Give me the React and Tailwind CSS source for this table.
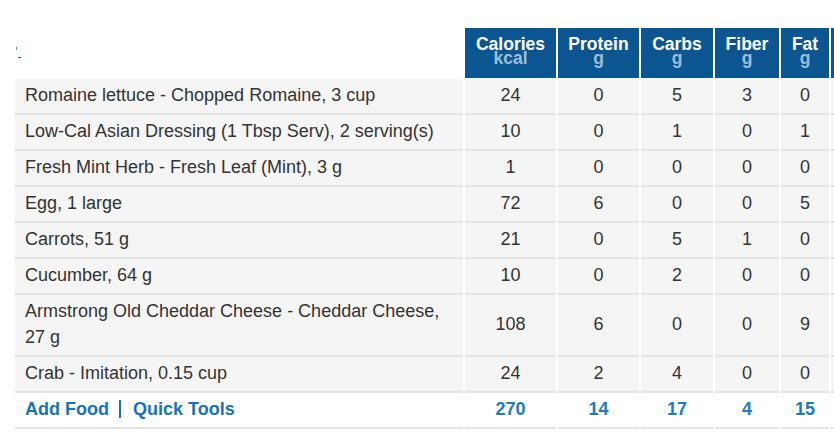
import React from "react";

const rows = [
  ["Romaine lettuce - Chopped Romaine, 3 cup", 24, 0, 5, 3, 0],
  ["Low-Cal Asian Dressing (1 Tbsp Serv), 2 serving(s)", 10, 0, 1, 0, 1],
  ["Fresh Mint Herb - Fresh Leaf (Mint), 3 g", 1, 0, 0, 0, 0],
  ["Egg, 1 large", 72, 6, 0, 0, 5],
  ["Carrots, 51 g", 21, 0, 5, 1, 0],
  ["Cucumber, 64 g", 10, 0, 2, 0, 0],
  ["Armstrong Old Cheddar Cheese - Cheddar Cheese, 27 g", 108, 6, 0, 0, 9],
  ["Crab - Imitation, 0.15 cup", 24, 2, 4, 0, 0],
];

const headers = [
  ["Calories", "kcal"],
  ["Protein", "g"],
  ["Carbs", "g"],
  ["Fiber", "g"],
  ["Fat", "g"],
];

export default function App() {
  return (
    <div className="relative w-[834px] h-[440px] overflow-hidden bg-white font-['Liberation_Sans',Arial,sans-serif] text-[#333333]">
      <div className="absolute left-[16px] top-[47px] w-px h-[3px] bg-[#6b8fb5]" />
      <div className="absolute left-[18px] top-[57px] w-[3px] h-px bg-[#2a5d93]" />
      <div className="pt-[28px] pl-[15px]">
        <div className="grid grid-cols-[448px_91px_81px_72px_64px_48px_60px] gap-x-[2px]">
          <div className="h-[50px] mb-px" />
          {headers.map(([a, b]) => (
            <div
              key={a}
              className="h-[50px] mb-px bg-[#0b5690] flex flex-col items-center pt-[9px] font-bold text-[17.5px] leading-[14px]"
            >
              <span className="text-white">{a}</span>
              <span className="text-[#9bbedc]">{b}</span>
            </div>
          ))}
          <div className="h-[50px] mb-px bg-[#0b5690]" />
          {rows.map((r, i) => (
            <React.Fragment key={i}>
              <div className="bg-[#f5f5f5] border-b-2 border-[#e4e4e4] px-[10px] pt-[3px] pb-[5px] text-[18px] leading-[26px]">
                {r[0]}
              </div>
              {r.slice(1).map((v, j) => (
                <div
                  key={j}
                  className="bg-[#f5f5f5] border-b-2 border-[#e4e4e4] flex items-center justify-center pb-[2px] text-[18px]"
                >
                  {v}
                </div>
              ))}
              <div className="bg-[#f5f5f5] border-b-2 border-[#e4e4e4]" />
            </React.Fragment>
          ))}
          <div className="h-[36px] border-b-2 border-[#e4e4e4] px-[10px] pb-[2px] flex items-center font-bold text-[18px] text-[#1a72b8]">
            <span>Add Food</span>
            <span className="ml-[10px] mr-[12px] w-[2px] h-[18px] bg-[#1a72b8]" />
            <span>Quick Tools</span>
          </div>
          {[270, 14, 17, 4, 15].map((v, j) => (
            <div
              key={j}
              className="h-[36px] border-b-2 border-[#e4e4e4] flex items-center justify-center pb-[2px] font-bold text-[18px] text-[#1f7bb6]"
            >
              {v}
            </div>
          ))}
          <div className="h-[36px] border-b-2 border-[#e4e4e4]" />
        </div>
      </div>
    </div>
  );
}
